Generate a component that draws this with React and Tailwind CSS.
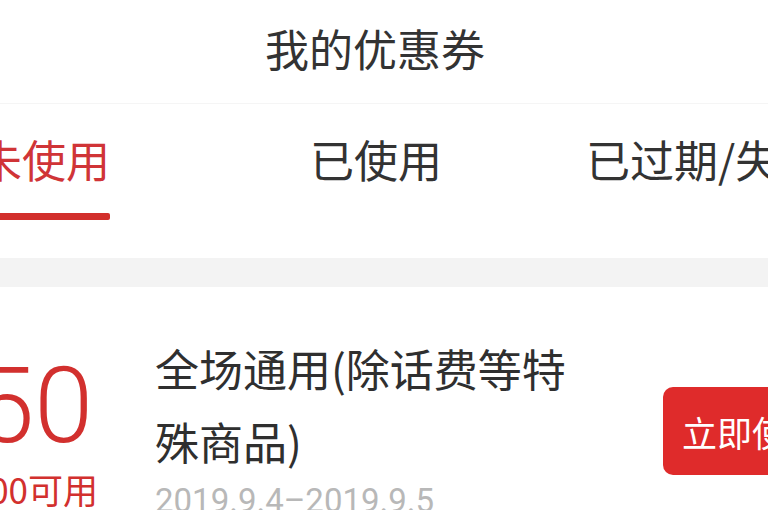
import React from "react";

export default function App() {
  return (
    <div className="w-[768px] h-[510px] overflow-hidden bg-white font-['Noto_Sans_CJK_SC',sans-serif] text-[#333]">
      {/* Header */}
      <div className="h-[104px] flex items-center justify-center pr-[18px] border-b border-[#f5f5f5]">
        <span className="text-[44px] leading-none -mt-[8px]">我的优惠券</span>
      </div>

      {/* Tabs */}
      <div className="flex items-start whitespace-nowrap pt-[33px] pb-[38px] -ml-[22px]">
        <div className="flex flex-col items-stretch shrink-0">
          <span className="text-[44px] leading-none text-[#d03437]">未使用</span>
          <div className="mt-[32px] h-[7px] bg-[#d22f2c] rounded-[2px]" />
        </div>
        <div className="ml-[200px] shrink-0">
          <span className="text-[44px] leading-none">已使用</span>
        </div>
        <div className="ml-[144px] shrink-0">
          <span className="text-[44px] leading-none">已过期/失效</span>
        </div>
      </div>

      {/* Gray band */}
      <div className="h-[29px] bg-[#f3f3f3]" />

      {/* Coupon card */}
      <div className="flex items-start whitespace-nowrap">
        <div className="shrink-0 w-[200px] -ml-[102px] mt-[66px] flex flex-col items-end">
          <div className="font-['Roboto',sans-serif] font-light text-[106px] leading-none text-[#d2302e] mr-[5px]">
            <span className="text-[40px]">¥</span>50
          </div>
          <div className="mt-[12px] text-[35px] leading-none text-[#d2302e]">满100可用</div>
        </div>
        <div className="shrink-0 ml-[57px] mt-[45px] w-[450px] flex flex-col">
          <div className="text-[44px] leading-[73px] whitespace-normal text-[#2f2f2f]">
            全场通用(除话费等特殊商品)
          </div>
          <div className="mt-[6px] font-['Roboto',sans-serif] text-[33px] leading-none text-[#b8b8b8]">
            2019.9.4–2019.9.5
          </div>
        </div>
        <div className="shrink-0 ml-[58px] mt-[100px] h-[88px] rounded-[10px] bg-[#df2b2b] pl-[19px] pr-[24px] flex items-center">
          <span className="text-[35px] leading-none text-white">立即使用</span>
        </div>
      </div>
    </div>
  );
}
